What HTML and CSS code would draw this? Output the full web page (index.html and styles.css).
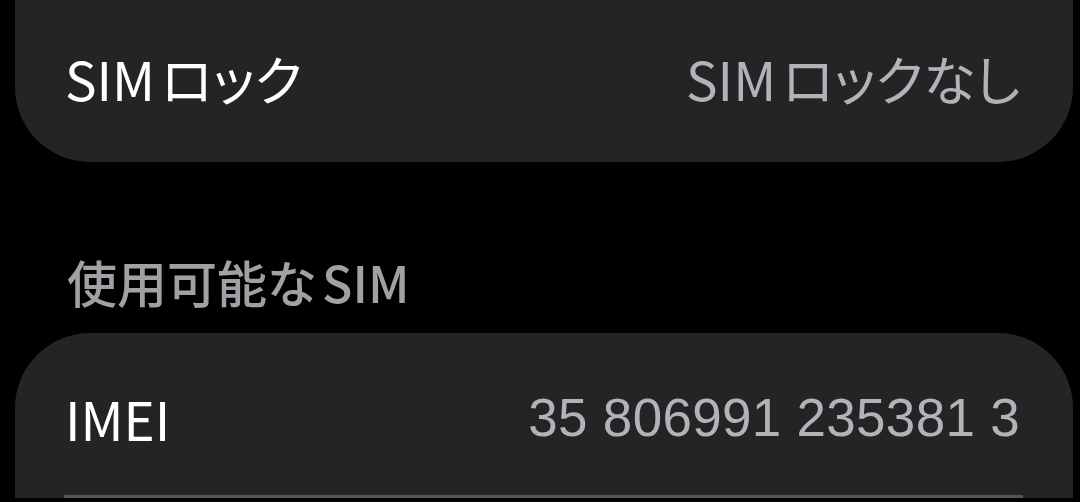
FILE: index.html
```html
<!DOCTYPE html>
<html lang="ja">
<head>
    <meta charset="UTF-8">
    <meta name="viewport" content="width=device-width, initial-scale=1.0">
    <title>SIM</title>
    <link rel="stylesheet" href="styles.css">
</head>
<body>
    <div class="screen">
        <div class="card card-top">
            <div class="row">
                <span class="label"><span class="latin">SIM</span>ロック</span>
                <span class="value"><span class="latin">SIM</span>ロックなし</span>
            </div>
        </div>

        <h2 class="section-title">使用可能な<span class="latin-after">SIM</span></h2>

        <div class="card card-open">
            <div class="row">
                <span class="label">IMEI</span>
                <span class="value number">35 806991 235381 3</span>
            </div>
            <div class="separator"></div>
        </div>
    </div>
</body>
</html>
```

FILE: styles.css
```css
* {
    margin: 0;
    padding: 0;
    box-sizing: border-box;
}

html, body {
    height: 100%;
    overflow: hidden;
}

body {
    background: #000;
    font-family: "Noto Sans CJK JP", "Noto Sans", sans-serif;
    font-feature-settings: "palt";
    color: #fff;
}

.screen {
    padding: 0 7px 0 15px;
}

.card {
    background: #242426;
    border-radius: 75px;
}

.card-top {
    border-top-left-radius: 0;
    border-top-right-radius: 0;
}

.card-open {
    border-bottom-left-radius: 0;
    border-bottom-right-radius: 0;
}

.row {
    display: flex;
    justify-content: space-between;
    align-items: center;
    height: 162px;
    padding: 0 53px 0 50px;
    font-size: 53px;
    line-height: 64px;
}

.card-top .row {
    padding-bottom: 7px;
}

.card-open .row {
    padding-top: 8px;
}

.latin {
    margin-right: 6px;
}

.latin-after {
    margin-left: 6px;
}

.label {
    color: #fff;
}

.value {
    color: #b2b2b7;
}

.number {
    font-family: "Liberation Sans", Arial, sans-serif;
    letter-spacing: 0.3px;
}

.section-title {
    padding: 89px 0 22px 52px;
    font-size: 50px;
    line-height: 60px;
    font-weight: 500;
    color: #a0a0a5;
}

.separator {
    height: 3px;
    margin: 0 50px 0 49px;
    background: #56565a;
}
```
